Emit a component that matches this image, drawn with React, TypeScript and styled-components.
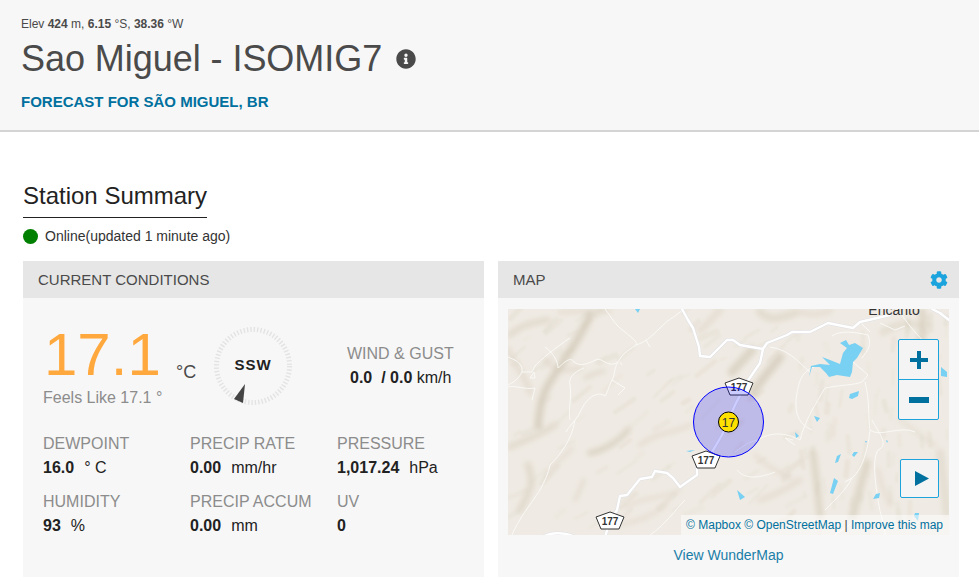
import React from "react";
import styled, { createGlobalStyle } from "styled-components";
import { FaCog, FaInfoCircle } from "react-icons/fa";

const Global = createGlobalStyle`
html, body {
    margin: 0;
    padding: 0;
    background: #fff;
    font-family: "Liberation Sans", Arial, sans-serif;
    overflow: hidden;
}
`;

const ridges: [string, number, number][] = [
    ["M590 315 C580 340 560 365 548 385 C540 400 540 410 538 425", 8, 0.75],
    ["M510 335 C520 325 535 322 548 320", 6, 0.5],
    ["M560 312 C575 312 590 310 610 311", 5, 0.35],
    ["M545 360 C555 370 565 372 580 368", 6, 0.35],
    ["M585 378 C592 374 598 372 604 371", 4, 0.45],
    ["M508 350 C515 365 525 375 530 392", 7, 0.35],
    ["M590 453 C605 450 620 440 628 430", 6, 0.65],
    ["M510 447 C525 440 540 435 555 425", 6, 0.5],
    ["M520 510 C530 490 535 485 528 465", 7, 0.5],
    ["M545 478 C550 465 565 458 572 448", 4, 0.35],
    ["M640 445 C660 430 670 435 690 425", 5, 0.35],
    ["M625 508 C645 495 660 500 680 490", 4, 0.35],
    ["M575 500 C580 490 582 485 584 480", 4, 0.4],
    ["M732 372 C738 365 745 358 752 350", 9, 0.65],
    ["M753 393 C762 378 772 368 780 357", 9, 0.7],
    ["M720 310 C712 318 708 325 700 330", 7, 0.35],
    ["M760 312 C770 322 780 318 795 313", 8, 0.45],
    ["M800 312 C810 315 820 315 830 311", 6, 0.35],
    ["M883 332 C895 325 905 322 918 325", 7, 0.4],
    ["M922 312 C924 322 924 330 921 340", 8, 0.6],
    ["M813 453 C816 475 818 495 820 515", 7, 0.6],
    ["M853 515 C858 495 862 480 867 463", 8, 0.6],
    ["M878 470 C880 480 885 495 890 505", 5, 0.3],
    ["M940 453 C943 475 945 495 947 513", 8, 0.4],
    ["M755 455 C765 465 775 470 790 478", 5, 0.3],
    ["M760 500 C775 495 785 490 800 480", 6, 0.35],
    ["M620 525 C640 520 655 515 665 505", 5, 0.3],
    ["M900 420 C915 430 925 440 935 445", 5, 0.25],
];

// small patches so the relief does not look like a few long strokes
const patches: { d: string; w: number; o: number }[] = [];
let seed = 7;
const rnd = () => {
    seed = (seed * 16807) % 2147483647;
    return seed / 2147483647;
};
for (let i = 0; i < 170; i++) {
    const x = 508 + rnd() * 441;
    const y = 309 + rnd() * 226;
    const len = 5 + rnd() * 14;
    const steep = x > 790;
    const dx = steep ? (rnd() - 0.5) * 5 : len;
    const dy = steep ? len : -len * (0.4 + rnd() * 0.7);
    patches.push({ d: `M${x} ${y} l${dx} ${dy}`, w: 2 + rnd() * 4, o: 0.15 + rnd() * 0.25 });
}

const minorRoads = [
    "M605 309 C612 318 615 325 625 332 C632 338 638 342 636 345 C625 352 622 355 618 362 C614 368 615 375 612 380 C608 388 608 392 605 396 C600 392 592 395 588 400 C582 405 580 415 575 420 C572 424 568 428 566 432",
    "M636 345 C645 342 650 338 660 328 C668 320 672 318 675 316 L684 309",
    "M646 340 L650 347",
    "M612 380 L625 388 L618 395",
    "M620 362 L622 365",
    "M508 357 C515 360 520 362 522 368 L522 372 L532 372 L535 366 C540 360 555 348 570 338",
    "M545 347 C552 352 558 360 558 368 C562 365 570 355 574 362 C582 368 590 362 598 359 C604 360 610 368 618 362",
    "M508 387 C515 385 525 390 535 388 L532 400",
    "M522 372 C518 380 512 383 508 385",
    "M534 372 L535 378 L530 378 Z",
    "M570 420 C568 408 572 398 570 385 C568 378 574 372 584 368",
    "M575 420 C572 440 560 455 550 465 C548 475 545 480 540 490 C530 505 518 520 512 535",
    "M810 372 C798 362 790 350 770 347",
    "M814 367 C800 372 798 385 796 400 C795 415 800 425 812 430",
    "M832 336 C840 330 855 332 868 335 C872 345 868 350 862 358",
    "M853 362 L868 375 L862 382 C855 385 840 385 825 388",
    "M825 388 C815 405 805 420 800 440",
    "M865 382 C870 400 868 420 870 430 C880 438 900 425 915 432",
    "M870 430 C868 450 862 470 852 478 C846 490 835 500 825 510",
    "M872 420 C878 432 890 445 878 450 C872 460 875 480 878 500 C880 515 885 525 885 535",
    "M800 440 C785 432 770 432 758 440 C748 442 745 445 735 452",
    "M793 440 L785 438 L795 445",
    "M852 478 L845 482",
    "M900 312 C908 325 925 345 935 350",
    "M880 323 L895 330 L905 326",
    "M860 322 L870 332",
    "M737 470 C745 480 760 478 775 472",
    "M650 535 C665 525 675 510 685 500",
    "M855 520 C850 525 842 530 835 535",
];

const lakes = [
    "M840 343 L846 340 L849 345 L855 343 L863 348 L857 358 L853 362 L852 372 L850 377 L837 375 L829 377 L826 373 L820 367 L812 367 L809 377 L811 366 L820 364 L830 365 L822 357 L830 360 L840 364 L843 353 L847 348 Z",
    "M850 394 L859 391 L858 396 L852 399 L849 398 Z",
    "M941 367 L947 372 L947 377 L941 376 Z",
    "M635 309 L640 309 L638 313 Z",
    "M682 309 L685 311 L683 314 Z",
    "M814 416 L820 418 L817 422 Z",
    "M795 432 L799 436 L796 438 Z",
    "M837 456 L841 454 L838 462 L835 463 Z",
    "M854 452 L858 452 L854 457 L852 455 Z",
    "M834 478 L838 481 L833 494 L830 493 Z",
    "M876 494 L880 493 L879 498 L873 499 Z",
    "M886 440 L888 441 L887 443 Z",
    "M865 441 L867 441 L866 443 Z",
    "M915 513 L919 513 L918 521 L914 516 Z",
    "M737 490 L745 497 L740 500 Z",
    "M686 451 L695 450 L690 452 Z",
];

const Shield: React.FC<{ x: number; y: number; label: string }> = ({ x, y, label }) => (
    <g transform={`translate(${x} ${y})`}>
        <polygon points="-14,-4 0,-9 14,-4 9,8 -9,8" fill="#fff" stroke="#333" strokeWidth="1" />
        <ShieldLabel x={0} y={4} textAnchor="middle">{label}</ShieldLabel>
    </g>
);

const majorRoads = [
    "M682 309 L688 320 L693 328 L699 347 L700 356 L710 357 L722 345 L727 340 L733 340 L740 345 L763 349 L767 343 L787 335 L792 332 L810 332 L828 323 L853 328 L860 322 L890 315",
    "M932 309 L940 313 L949 320",
    "M763 349 L760 363 L747 382 L735 405 L722 435 L712 452 L697 467 L697 475 L680 487 L673 478 L667 473 L655 471 L652 477 L640 479 L627 495 L620 496 L617 510 L610 521 L605 537",
    "M543 537 C550 532 565 532 575 537",
];

const MapDrawing: React.FC = () => (
    <MapSvg viewBox="508 309 441 226" preserveAspectRatio="none">
        <defs>
            <filter id="soft" x="-20%" y="-20%" width="140%" height="140%">
                <feGaussianBlur stdDeviation="2.6" />
            </filter>
            <filter id="fine" x="-20%" y="-20%" width="140%" height="140%">
                <feGaussianBlur stdDeviation="1.1" />
            </filter>
            <clipPath id="frame">
                <rect x="508" y="309" width="441" height="226" />
            </clipPath>
        </defs>
        <g clipPath="url(#frame)">
            <rect x="508" y="309" width="441" height="226" fill="#efeae3" />
            <g filter="url(#fine)" fill="none" strokeLinecap="round">
                {patches.map((p, i) => (
                    <path key={i} d={p.d} stroke="#e0dacc" strokeWidth={p.w} strokeOpacity={p.o} />
                ))}
            </g>
            <g filter="url(#soft)" fill="none" strokeLinecap="round">
                {ridges.map(([d, w, o], i) => (
                    <path key={i} d={d} stroke="#d3cbb9" strokeWidth={w} strokeOpacity={o} />
                ))}
            </g>
            <g fill="none" stroke="#fbfaf8" strokeWidth="0.9" strokeLinejoin="round">
                {minorRoads.map((d, i) => (
                    <path key={i} d={d} />
                ))}
            </g>
            <g fill="#78d0f3">
                {lakes.map((d, i) => (
                    <path key={i} d={d} />
                ))}
            </g>
            <g fill="none" strokeLinejoin="round" strokeLinecap="round">
                {majorRoads.map((d, i) => (
                    <path key={i} d={d} stroke="#dfe0e6" strokeWidth="3.4" />
                ))}
                {majorRoads.map((d, i) => (
                    <path key={i} d={d} stroke="#fff" strokeWidth="2.4" />
                ))}
            </g>
            <text x="894" y="315" textAnchor="middle" fontFamily="'Liberation Sans', sans-serif" fontSize="14" fill="#333">Encanto</text>
            <Shield x={739} y={387} label="177" />
            <Shield x={706} y={460} label="177" />
            <Shield x={610} y={521} label="177" />
            <circle cx="728.5" cy="422" r="35" fill="#0000ff" fillOpacity="0.2" stroke="#0000ff" strokeWidth="1" />
            <circle cx="728.5" cy="422" r="10" fill="#ffe100" stroke="#000" strokeWidth="1" />
            <text x="728.5" y="426.5" textAnchor="middle" fontFamily="'Liberation Sans', sans-serif" fontSize="12" fill="#333">17</text>
        </g>
    </MapSvg>
);

const Gauge: React.FC = () => (
    <GaugeBox>
        <svg width="80" height="80" viewBox="0 0 80 80">
            <circle cx="40" cy="40" r="36.5" fill="none" stroke="#e3e3e3" strokeWidth="5" strokeDasharray="1.4 1.98" />
            <polygon points="32,58 21,73 30,77" fill="#444" />
        </svg>
        <GaugeText>SSW</GaugeText>
    </GaugeBox>
);

const stats = [
    { label: "DEWPOINT", value: "16.0", unit: "° C" },
    { label: "PRECIP RATE", value: "0.00", unit: "mm/hr" },
    { label: "PRESSURE", value: "1,017.24", unit: "hPa" },
    { label: "HUMIDITY", value: "93", unit: "%" },
    { label: "PRECIP ACCUM", value: "0.00", unit: "mm" },
    { label: "UV", value: "0", unit: "" },
];

const App: React.FC = () => {
    return (
        <>
            <Global />
            <Header>
                <Elev>Elev <b>424</b> m, <b>6.15</b> °S, <b>38.36</b> °W</Elev>
                <TitleRow>
                    <Title>Sao Miguel - ISOMIG7</Title>
                    <FaInfoCircle size={20} color="#4a4a4a" />
                </TitleRow>
                <Forecast href="#">FORECAST FOR SÃO MIGUEL, BR</Forecast>
            </Header>
            <Main>
                <SectionTitle>Station Summary</SectionTitle>
                <Status>
                    <Dot />
                    Online(updated 1 minute ago)
                </Status>
                <Panels>
                    <Panel>
                        <PanelHead>CURRENT CONDITIONS</PanelHead>
                        <Conditions>
                            <TopRow>
                                <TempBlock>
                                    <TempRow>
                                        <Temp>17.1</Temp>
                                        <TempUnit>°C</TempUnit>
                                    </TempRow>
                                    <Feels>Feels Like 17.1 °</Feels>
                                </TempBlock>
                                <Gauge />
                                <Wind>
                                    <Label>WIND &amp; GUST</Label>
                                    <WindValue><b>0.0</b>&nbsp; <b>/ 0.0</b> km/h</WindValue>
                                </Wind>
                            </TopRow>
                            <Stats>
                                {stats.map((s) => (
                                    <div key={s.label}>
                                        <Label>{s.label}</Label>
                                        <Value>
                                            <b>{s.value}</b>
                                            {s.unit && <Unit>{s.unit}</Unit>}
                                        </Value>
                                    </div>
                                ))}
                            </Stats>
                        </Conditions>
                    </Panel>
                    <Panel>
                        <PanelHead>
                            MAP
                            <FaCog size={18} color="#1ba3dd" />
                        </PanelHead>
                        <MapBody>
                            <MapFrame>
                                <MapDrawing />
                                <ZoomBox>
                                    <MapBtn>
                                        <svg width="18" height="18" viewBox="0 0 18 18"><path d="M7 0h4v7h7v4h-7v7H7v-7H0V7h7z" fill="#00709e" /></svg>
                                    </MapBtn>
                                    <MapBtn>
                                        <svg width="20" height="6" viewBox="0 0 20 6"><rect width="20" height="6" fill="#00709e" /></svg>
                                    </MapBtn>
                                </ZoomBox>
                                <PlayBtn>
                                    <svg width="14" height="15" viewBox="0 0 14 15"><polygon points="0,0 14,7.5 0,15" fill="#00709e" /></svg>
                                </PlayBtn>
                                <Attribution>
                                    <a href="#">© Mapbox</a> <a href="#">© OpenStreetMap</a> | <a href="#">Improve this map</a>
                                </Attribution>
                            </MapFrame>
                            <MapLink href="#">View WunderMap</MapLink>
                        </MapBody>
                    </Panel>
                </Panels>
            </Main>
        </>
    );
};

export default App;

const Header = styled.header`
height: 130px;
box-sizing: content-box;
background: #f7f7f7;
border-bottom: 2px solid #d4d4d4;
padding-left: 21px;
overflow: hidden;
`;

const Elev = styled.div`
margin-top: 16px;
font-size: 12px;
line-height: 17px;
color: #4a4a4a;
`;

const TitleRow = styled.div`
display: flex;
align-items: center;
gap: 14px;
height: 40px;
margin-top: 6px;
`;

const Title = styled.h1`
margin: 0;
font-size: 36px;
font-weight: 400;
line-height: 40px;
letter-spacing: -0.05px;
color: #4a4a4a;
`;

const Forecast = styled.a`
display: block;
margin-top: 13px;
font-size: 15px;
font-weight: 700;
line-height: 20px;
color: #00709e;
text-decoration: none;
`;

const Main = styled.main`
padding: 0 20px 9px 23px;
`;

const SectionTitle = styled.h2`
display: inline-block;
margin: 49px 0 0;
padding-bottom: 6px;
font-size: 24px;
font-weight: 400;
line-height: 30px;
color: #222;
border-bottom: 1px solid #222;
`;

const Status = styled.div`
display: flex;
align-items: center;
gap: 7px;
height: 20px;
margin-top: 8px;
font-size: 14px;
color: #333;
`;

const Dot = styled.span`
width: 15px;
height: 15px;
border-radius: 50%;
background: #008000;
`;

const Panels = styled.div`
display: grid;
grid-template-columns: 461px 461px;
gap: 14px;
margin-top: 15px;
`;

const Panel = styled.section`
height: 316px;
background: #f7f7f7;
`;

const PanelHead = styled.div`
display: flex;
align-items: center;
justify-content: space-between;
height: 37px;
padding: 0 11px 0 15px;
background: #e6e6e6;
font-size: 15px;
color: #4a4a4a;
`;

const Conditions = styled.div`
padding: 27px 20px 0;
`;

const TopRow = styled.div`
display: flex;
align-items: flex-start;
`;

const TempBlock = styled.div`
width: 170px;
`;

const TempRow = styled.div`
display: flex;
align-items: flex-end;
`;

const Temp = styled.div`
width: 133px;
padding-left: 1px;
box-sizing: border-box;
font-size: 60px;
line-height: 60px;
color: #ffa83d;
`;

const TempUnit = styled.span`
font-size: 18px;
line-height: 24px;
padding-bottom: 1px;
color: #4a4a4a;
`;

const Feels = styled.div`
margin-top: 4px;
font-size: 16px;
line-height: 18px;
color: #8c8c8c;
`;

const GaugeBox = styled.div`
position: relative;
width: 80px;
height: 80px;
margin-left: 0;
margin-top: 1px;
svg {
    display: block;
}
`;

const GaugeText = styled.span`
position: absolute;
left: 0;
right: 0;
top: 30px;
text-align: center;
font-size: 15px;
font-weight: 700;
line-height: 18px;
letter-spacing: 1px;
color: #222;
`;

const Wind = styled.div`
margin: 19px 0 0 54px;
`;

const WindValue = styled.div`
margin: 5px 0 0 3px;
font-size: 16px;
line-height: 18px;
color: #222;
`;

const Stats = styled.div`
display: grid;
grid-template-columns: repeat(3, 147px);
grid-auto-rows: 58px;
margin-top: 27px;
`;

const Label = styled.div`
font-size: 16px;
line-height: 20px;
color: #8c8c8c;
`;

const Value = styled.div`
margin-top: 4px;
font-size: 16px;
line-height: 20px;
color: #222;
`;

const Unit = styled.span`
margin-left: 10px;
font-weight: 400;
`;

const MapBody = styled.div`
padding: 11px 10px 0;
text-align: center;
`;

const MapFrame = styled.div`
position: relative;
height: 226px;
overflow: hidden;
`;

const MapSvg = styled.svg`
display: block;
width: 441px;
height: 226px;
`;

const ShieldLabel = styled.text`
font-family: "Liberation Sans", sans-serif;
font-size: 10px;
font-weight: 700;
fill: #333;
`;

const ZoomBox = styled.div`
position: absolute;
top: 30px;
right: 10px;
width: 39px;
border: 1px solid #1ba3dd;
border-radius: 2px;
background: #f4f4f4;
`;

const MapBtn = styled.div`
display: flex;
align-items: center;
justify-content: center;
height: 39px;
& + & {
    border-top: 1px solid #1ba3dd;
}
`;

const PlayBtn = styled.div`
position: absolute;
top: 150px;
right: 10px;
display: flex;
align-items: center;
justify-content: center;
width: 37px;
height: 37px;
border: 1px solid #1ba3dd;
border-radius: 2px;
background: #f4f4f4;
svg {
    margin-left: 4px;
}
`;

const Attribution = styled.div`
position: absolute;
right: 0;
bottom: 0;
height: 20px;
padding: 0 6px 0 5px;
background: rgba(255, 255, 255, 0.5);
font-size: 12px;
line-height: 20px;
color: #444;
white-space: nowrap;
a {
    color: #00709e;
    text-decoration: none;
}
`;

const MapLink = styled.a`
display: block;
margin-top: 10px;
font-size: 14px;
line-height: 20px;
color: #1a7ea8;
text-decoration: none;
`;
